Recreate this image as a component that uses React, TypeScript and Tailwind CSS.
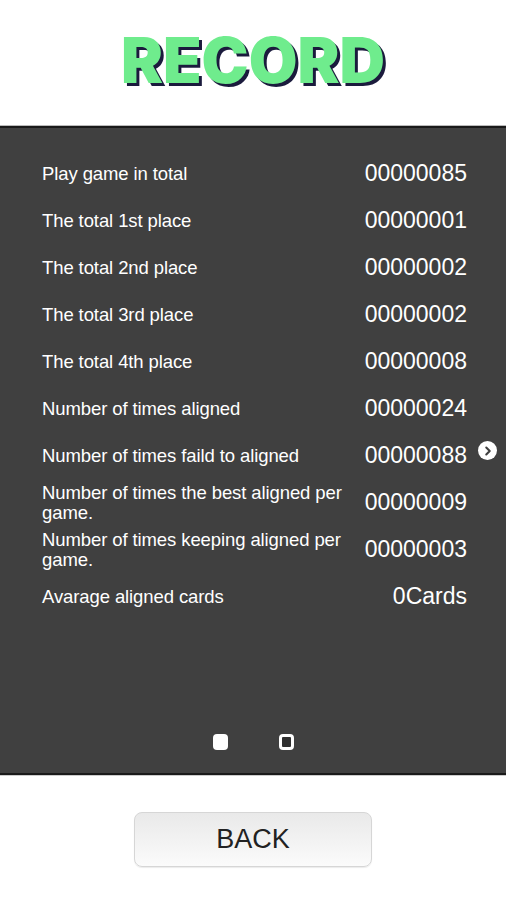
import { ChevronRight } from "lucide-react";

const rows: { label: string; value: string }[] = [
  { label: "Play game in total", value: "00000085" },
  { label: "The total 1st place", value: "00000001" },
  { label: "The total 2nd place", value: "00000002" },
  { label: "The total 3rd place", value: "00000002" },
  { label: "The total 4th place", value: "00000008" },
  { label: "Number of times aligned", value: "00000024" },
  { label: "Number of times faild to aligned", value: "00000088" },
  { label: "Number of times the best aligned per game.", value: "00000009" },
  { label: "Number of times keeping aligned per game.", value: "00000003" },
  { label: "Avarage aligned cards", value: "0Cards" },
];

export default function App() {
  return (
    <div className="w-[506px] h-[900px] bg-white flex flex-col font-['Liberation_Sans',Arial,sans-serif]">
      <div className="h-[126px] flex items-center justify-center">
        <h1 className="text-[63px] font-black leading-none text-[#6fec8d] font-['Inter',sans-serif] [text-shadow:3px_3px_0_#1b1b3d] mt-[-6px]">
          RECORD
        </h1>
      </div>

      <div className="relative h-[649px] bg-[#404040] border-t-[2px] border-b-[2px] border-[#1a1a1a] shadow-[0_-1px_0_#bbb,0_1px_0_#ccc] flex flex-col">
        <div className="pt-[22px] pl-[42px] pr-[39px] flex flex-col">
          {rows.map((r) => (
            <div key={r.label} className="h-[47px] flex items-center justify-between gap-2">
              <span className="text-white text-[18.5px] leading-[20px] max-w-[314px] tracking-[-0.1px]">{r.label}</span>
              <span className="text-white text-[23px] leading-none whitespace-nowrap">{r.value}</span>
            </div>
          ))}
        </div>

        <div className="absolute left-[478px] top-[313px] w-[19px] h-[19px] rounded-full bg-white flex items-center justify-center">
          <ChevronRight size={14} strokeWidth={3.5} color="#404040" />
        </div>

        <div className="mt-auto mb-[23px] flex justify-center items-center gap-[51px] pl-[1px]">
          <div className="w-[15px] h-[16px] rounded-[4px] bg-white" />
          <div className="w-[15px] h-[16px] rounded-[4px] border-[3px] border-white bg-[#303030]" />
        </div>
      </div>

      <div className="flex-1 flex items-start justify-center pt-[37px]">
        <button className="w-[238px] h-[55px] rounded-[8px] border border-[#d6d6d6] bg-gradient-to-b from-[#e9e9e9] to-[#fbfbfb] shadow-[0_1px_1px_rgba(0,0,0,0.08)] text-[27px] text-[#222] leading-none">
          BACK
        </button>
      </div>
    </div>
  );
}
